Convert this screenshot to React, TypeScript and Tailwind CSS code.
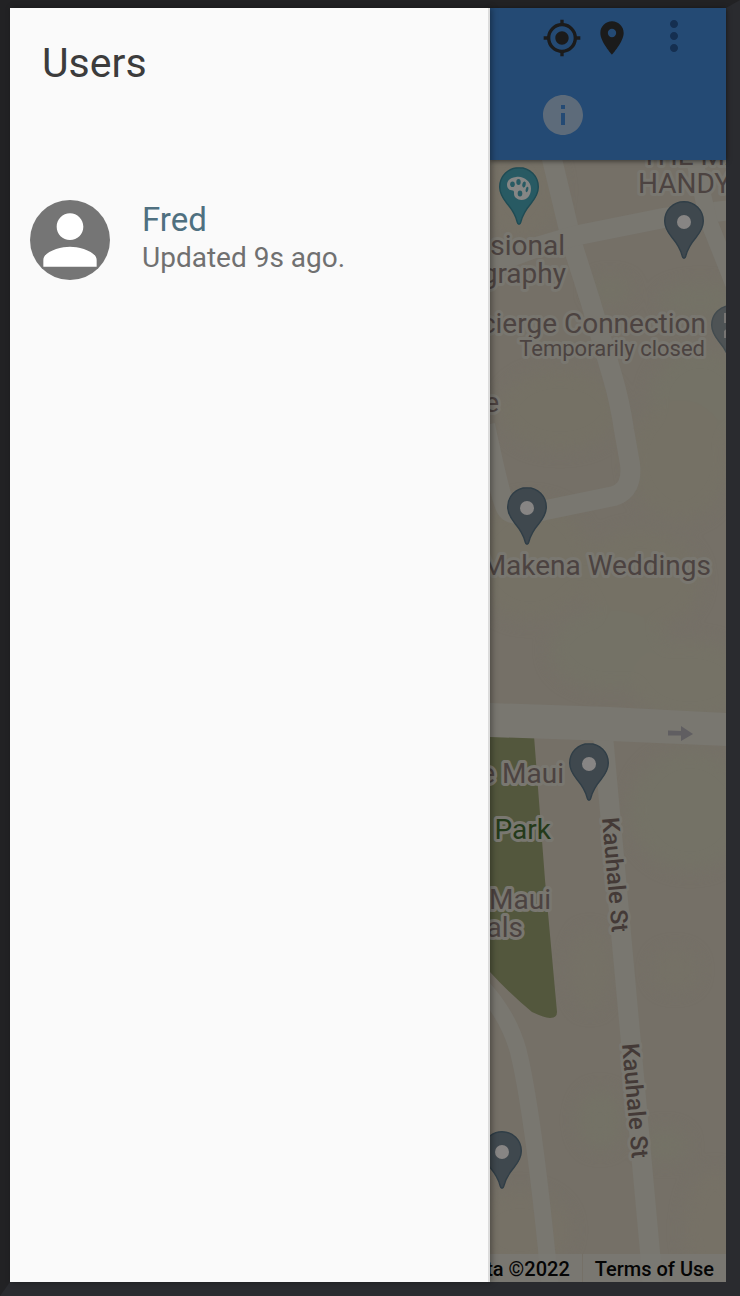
import React from 'react';
import { MdInfo, MdMoreVert, MdMyLocation, MdPerson, MdPlace } from 'react-icons/md';

type PinProps = { x: number; y: number; fill?: string; stroke?: string; dot?: boolean };

/* x is the middle of the pin, y is its top edge */
function Pin({ x, y, fill = '#3f484e', stroke = '#303e47', dot = true }: PinProps) {
  return (
    <g transform={`translate(${x} ${y})`}>
      <path
        d="M0 .7C-10.8 .7-19.3 9.2-19.3 20C-19.3 27-16 31.500-12 36.500C-6.500 43-3.500 48-1.800 55C-1.300 57.200-.6 57.200 0 57.200S1.300 57.200 1.800 55C3.500 48 6.500 43 12 36.500C16 31.500 19.300 27 19.300 20C19.300 9.200 10.800 .7 0 .7Z"
        fill={fill}
        stroke={stroke}
        strokeWidth="1.400"
      />
      {dot && <circle cx="0" cy="21" r="7" fill="#878584" />}
    </g>
  );
}

type LabelProps = {
  x: number;
  y: number;
  end?: boolean;
  className?: string;
  rotate?: number;
  children: string;
};

function Label({ x, y, end = false, className = 'text-[28px] fill-[#4c4341]', rotate = 0, children }: LabelProps) {
  return (
    <text
      transform={`translate(${x} ${y}) rotate(${rotate})`}
      textAnchor={end ? 'end' : 'start'}
      className={className}
      stroke="#797770"
      strokeWidth="6"
      strokeLinejoin="round"
      paintOrder="stroke"
    >
      {children}
    </text>
  );
}

const patches = [
  { cx: 700, cy: 400, rx: 50, ry: 50, fill: '#747266' },
  { cx: 610, cy: 290, rx: 20, ry: 12, fill: '#747266' },
  { cx: 700, cy: 300, rx: 40, ry: 16, fill: '#747266' },
  { cx: 560, cy: 410, rx: 60, ry: 40, fill: '#757165' },
  { cx: 680, cy: 460, rx: 50, ry: 60, fill: '#757165' },
  { cx: 530, cy: 560, rx: 60, ry: 60, fill: '#757165' },
  { cx: 640, cy: 580, rx: 60, ry: 50, fill: '#757165' },
  { cx: 610, cy: 650, rx: 60, ry: 40, fill: '#747266' },
  { cx: 690, cy: 680, rx: 60, ry: 40, fill: '#757266' },
  { cx: 690, cy: 810, rx: 60, ry: 60, fill: '#747266' },
  { cx: 590, cy: 970, rx: 20, ry: 40, fill: '#757166' },
  { cx: 675, cy: 970, rx: 22, ry: 20, fill: '#757166' },
  { cx: 600, cy: 1120, rx: 22, ry: 30, fill: '#747266' },
  { cx: 665, cy: 1145, rx: 22, ry: 16, fill: '#747266' },
  { cx: 520, cy: 1230, rx: 50, ry: 40, fill: '#767166' },
  { cx: 715, cy: 1230, rx: 30, ry: 60, fill: '#767166' },
  { cx: 520, cy: 190, rx: 40, ry: 50, fill: '#767166' },
];

function StreetMap() {
  return (
    <svg
      role="img"
      aria-label="Street map"
      viewBox="490 160 236 1122"
      preserveAspectRatio="xMinYMin slice"
      className="absolute inset-0 h-full w-full font-['Roboto',sans-serif]"
    >
      <defs>
        <filter id="soft" x="-50%" y="-50%" width="200%" height="200%" colorInterpolationFilters="sRGB">
          <feGaussianBlur stdDeviation="8" />
        </filter>
      </defs>
      <rect x="490" y="160" width="236" height="1122" fill="#757067" />
      <g filter="url(#soft)">
        {patches.map((p, i) => (
          <ellipse key={i} {...p} />
        ))}
      </g>

      <path d="M490 736H534L537 775L545 880L557 1012Q557 1018 550 1018Q545 1018 532 1012Q510 994 490 972Z" fill="#53573d" />

      <g fill="none" stroke="#797770">
        <path d="M551 155L568 226Q571 242 576 256L590 300L612 375Q620 402 624 430L630 464Q633 490 614 496L546 510Q512 520 506 508Q501 500 485 425" strokeWidth="20" strokeLinejoin="round" />
        <path d="M480 268L540 246L574 236L664 218L740 209" strokeWidth="20" />
        <path d="M692 150L709 222L740 300" strokeWidth="17" />
        <path d="M603 735L653 1285" strokeWidth="20" />
        <path d="M482 987Q508 1015 518 1050C528 1090 538 1160 550 1285" strokeWidth="17" />
      </g>
      <path d="M490 703L610 707L726 713V746L610 741L490 737Z" fill="#797770" />
      <path d="M668 730.500L681 731V726L693 734L681 741V735.500H668Z" fill="#605e61" />

      <Label x={641} y={165}>THE MA</Label>
      <Label x={638} y={193}>HANDY</Label>
      <Label x={565} y={255} end>sional</Label>
      <Label x={566} y={283} end>graphy</Label>
      <Label x={706} y={333} end>cierge Connection</Label>
      <Label x={705} y={356} end className="text-[22px] fill-[#4c4341]">Temporarily closed</Label>
      <Label x={499} y={412} end>e</Label>
      <Label x={711} y={575} end>Makena Weddings</Label>
      <Label x={564} y={783} end>e Maui</Label>
      <Label x={551} y={839} end className="text-[28px] fill-[#243a1a]">Park</Label>
      <Label x={551} y={909} end>Maui</Label>
      <Label x={523} y={937} end>als</Label>
      <Label x={602} y={818} rotate={85} className="text-[24px] font-medium fill-[#443a37]">Kauhale St</Label>
      <Label x={622} y={1044} rotate={85} className="text-[24px] font-medium fill-[#443a37]">Kauhale St</Label>

      <Pin x={519} y={167} fill="#285a63" stroke="#1f4b54" dot={false} />
      <path
        d="M516 177C523 175.500 531 181 531 188.500C531 195.500 527 200 521.500 200C517 200 513.800 197 514 193.500C514.200 191 513.500 190.300 511.500 190.200C508.800 190 507 187.800 507 184.700C507 180 511 177.500 516 177Z"
        fill="#858685"
      />
      <g fill="#285a63">
        <ellipse cx="512.500" cy="184.300" rx="2.300" ry="2.800" />
        <ellipse cx="518.500" cy="182" rx="2.200" ry="3" />
        <ellipse cx="524" cy="184.500" rx="1.700" ry="3" transform="rotate(15 524 184.500)" />
        <ellipse cx="527" cy="189.500" rx="1.300" ry="2.800" transform="rotate(15 527 189.500)" />
        <ellipse cx="520" cy="193.500" rx="2.300" ry="3" />
      </g>
      <Pin x={684} y={201} />
      <Pin x={731} y={305} fill="#4e5355" stroke="#424b4f" dot={false} />
      <path d="M724 313H730V321H726V323H724ZM724 331L730 326V338H724Z" fill="#777573" />
      <Pin x={527} y={487} />
      <Pin x={589} y={743} />
      <Pin x={502} y={1131} />
    </svg>
  );
}

export default function App() {
  return (
    <div className="flex min-h-screen border-t-8 border-r-14 border-b-14 border-l-10 border-t-[#222224] border-r-[#2a2b2f] border-b-[#2a2b2f] border-l-[#222224] bg-[#757067] font-['Roboto',sans-serif]">
      <aside className="z-10 w-[480px] shrink-0 border-r-2 border-[#dcdcdc] bg-[#fafafa] shadow-[2px_0_6px_rgba(0,0,0,0.35)]">
        <h1 className="px-8 pt-[31px] text-[41px] leading-[48px] text-[#3c3c3c]">Users</h1>
        <ul className="mt-[113px]">
          <li className="flex gap-8 px-5">
            <div className="flex size-20 shrink-0 overflow-hidden rounded-full bg-[#757575]">
              <MdPerson size={80} color="#ffffff" />
            </div>
            <div>
              <p className="text-[33px] leading-10 text-[#4f7080]">Fred</p>
              <p className="text-[28px] leading-9 text-[#707070]">Updated 9s ago.</p>
            </div>
          </li>
        </ul>
      </aside>

      <main className="flex min-w-0 flex-1 flex-col">
        <header className="z-[1] h-[152px] bg-[#244a74] shadow-[0_1px_5px_rgba(0,0,0,0.55)]">
          <div className="flex items-start pt-1 pr-7 pl-[52px]">
            <div className="flex gap-[10px] pt-[6px]">
              <button type="button" aria-label="My location" className="text-[#1b1b1b]">
                <MdMyLocation size={40} />
              </button>
              <button type="button" aria-label="Places" className="text-[#1b1b1b]">
                <MdPlace size={40} />
              </button>
            </div>
            <button type="button" aria-label="More options" className="ml-auto text-[#152f50]">
              <MdMoreVert size={48} />
            </button>
          </div>
          <button type="button" aria-label="Information" className="mt-[31px] ml-[49px] block text-[#5d6b7a]">
            <MdInfo size={48} />
          </button>
        </header>

        <section className="relative flex flex-1 flex-col justify-end overflow-hidden">
          <StreetMap />
          <footer className="relative flex h-7 justify-end text-[20px] leading-[30px] font-medium whitespace-nowrap text-[#050505]">
            <span className="flex flex-1 justify-end overflow-hidden bg-[#7b7974]/80 pr-3">ta ©2022</span>
            <a href="#terms" className="ml-px bg-[#7b7974]/80 px-3">Terms of Use</a>
          </footer>
        </section>
      </main>
    </div>
  );
}
